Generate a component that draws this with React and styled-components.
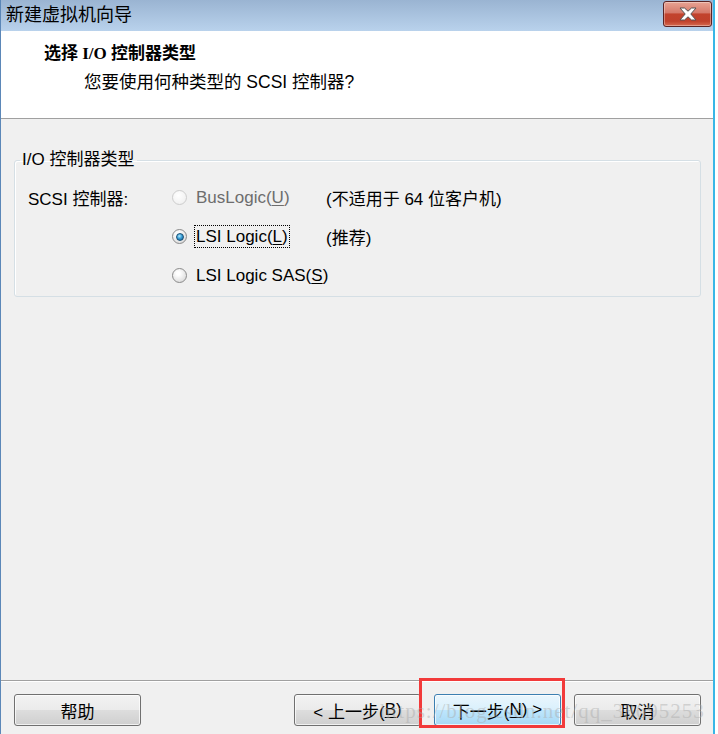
import React from 'react';
import styled, { createGlobalStyle } from 'styled-components';

const Global = createGlobalStyle`
  html, body { margin: 0; padding: 0; background: #fff; }
  body { font-family: "Liberation Sans", "Noto Sans CJK SC", sans-serif; }
`;

const Page = styled.div`
  position: relative;
  display: flex;
  width: 718px;
  height: 734px;
  overflow: hidden;
`;

const Window = styled.div`
  width: 712px;
  display: flex;
  flex-direction: column;
  border-left: 1px solid #5b87b8;
  border-right: 2px solid #38b6e6;
  background: #f0f0f0;
`;

const Backdrop = styled.div`
  flex: 1;
  background: #fff;
`;

const TitleBar = styled.div`
  height: 31px;
  display: flex;
  align-items: flex-start;
  padding-left: 5px;
  background: linear-gradient(#9ab4d2, #b9d2ec);
`;

const TitleText = styled.div`
  font-size: 18px;
  line-height: 30px;
  color: #000;
`;

const CloseBtn = styled.div`
  margin: 1px 1px 0 auto;
  width: 47px;
  height: 24px;
  border: 1px solid #5a2424;
  border-radius: 3px;
  display: flex;
  align-items: center;
  justify-content: center;
  background: linear-gradient(#e8a393 0%, #d5796a 45%, #c2432d 50%, #c0412c 80%, #d66a50 100%);
  box-shadow: inset 0 0 0 1px rgba(255, 255, 255, 0.35);
`;

const Header = styled.div`
  height: 88px;
  background: #fff;
  border-bottom: 1px solid #a0a0a0;
  padding: 12px 0 0 43px;
  box-sizing: border-box;
`;

const Heading = styled.div`
  font-family: "Liberation Serif", "Noto Sans CJK SC", serif;
  font-weight: bold;
  font-size: 17px;
  line-height: 22px;
  color: #000;
`;

const SubHeading = styled.div`
  margin: 6px 0 0 40px;
  font-size: 17.5px;
  line-height: 22px;
  color: #000;
`;

const Body = styled.div`
  flex: 1;
  padding: 0 12px 0 13px;
`;

const Group = styled.fieldset`
  margin: 31px 0 0 0;
  padding: 8px 0 1px 13px;
  border: 1px solid #d5dfe5;
  border-radius: 3px;
  box-shadow: inset 1px 1px 0 #fff;
`;

const Legend = styled.legend`
  padding: 0 3px 0 2px;
  margin-left: -8px;
  font-size: 17px;
  line-height: 20px;
  color: #000;
`;

const Options = styled.div`
  display: grid;
  grid-template-columns: 144px 154px 1fr;
  grid-auto-rows: 39px;
  align-items: center;
  font-size: 17px;
  color: #000;
  white-space: nowrap;
`;

const FieldLabel = styled.div`
  grid-column: 1;
`;

const Choice = styled.label`
  grid-column: 2;
  display: flex;
  align-items: center;
  gap: 8px;
  color: ${p => (p.disabled ? '#6d6d6d' : '#000')};
`;

const Radio = styled.span`
  flex: none;
  width: 15px;
  height: 15px;
  border-radius: 50%;
  box-sizing: border-box;
  display: flex;
  align-items: center;
  justify-content: center;
  border: 1px solid ${p => (p.disabled ? '#cdcdcd' : '#8a8a8a')};
  background: ${p =>
    p.disabled
      ? 'radial-gradient(circle at 40% 35%, #fff, #ececec)'
      : 'radial-gradient(circle at 40% 35%, #fff 15%, #d6d6d6 90%)'};
  &::after {
    content: '';
    display: ${p => (p.checked ? 'block' : 'none')};
    width: 8px;
    height: 8px;
    border-radius: 50%;
    box-sizing: border-box;
    border: 1px solid #1b4f73;
    background: radial-gradient(circle at 40% 35%, #b5ecff 0%, #3aa0d8 45%, #0e5687 100%);
  }
`;

const ChoiceText = styled.span`
  padding: 0 1px;
  line-height: 21px;
  outline: ${p => (p.focused ? '1px dotted #000' : 'none')};
  u { text-decoration: underline; text-underline-offset: 2px; }
`;

const Note = styled.div`
  grid-column: 3;
`;

const Footer = styled.div`
  border-top: 1px solid #a0a0a0;
  box-shadow: inset 0 1px 0 #fff;
  padding: 13px 12px 8px 13px;
  display: flex;
  gap: 13px;
`;

const Button = styled.div`
  width: 125px;
  height: 30px;
  border: 1px solid ${p => (p.primary ? '#3c7fb1' : '#707070')};
  border-radius: 3px;
  display: flex;
  align-items: center;
  justify-content: center;
  font-size: 17px;
  color: #000;
  white-space: nowrap;
  background: ${p =>
    p.primary
      ? 'linear-gradient(#eaf6fd 0%, #d9f0fc 50%, #bee6fd 51%, #a7d9f5 100%)'
      : 'linear-gradient(#f2f2f2 0%, #ebebeb 50%, #dddddd 51%, #cfcfcf 100%)'};
  box-shadow: inset 0 0 0 1px rgba(255, 255, 255, 0.7);
  margin-left: ${p => (p.push ? 'auto' : '0')};
  u { text-decoration: underline; text-underline-offset: 2px; }
`;

const Highlight = styled.div`
  position: absolute;
  left: 419px;
  top: 678px;
  width: 140px;
  height: 44px;
  border: 3px solid #f23a3a;
  pointer-events: none;
`;

const Watermark = styled.div`
  position: absolute;
  left: 380px;
  top: 699px;
  font-family: "Liberation Serif", serif;
  font-size: 21px;
  letter-spacing: 1px;
  color: rgba(170, 170, 170, 0.45);
  pointer-events: none;
  white-space: nowrap;
`;

const CloseIcon = () => (
  <svg width="22" height="16" viewBox="0 0 22 16">
    <path
      d="M3 2 L7.5 2 L11 5.2 L14.5 2 L19 2 L13.8 8 L19 14 L14.5 14 L11 10.8 L7.5 14 L3 14 L8.2 8 Z"
      fill="#fff"
      stroke="#555"
      strokeWidth="1"
      strokeLinejoin="round"
    />
  </svg>
);

export default function App() {
  return (
    <>
      <Global />
      <Page>
        <Window>
          <TitleBar>
            <TitleText>新建虚拟机向导</TitleText>
            <CloseBtn>
              <CloseIcon />
            </CloseBtn>
          </TitleBar>
          <Header>
            <Heading>选择 I/O 控制器类型</Heading>
            <SubHeading>您要使用何种类型的 SCSI 控制器?</SubHeading>
          </Header>
          <Body>
            <Group>
              <Legend>I/O 控制器类型</Legend>
              <Options>
                <FieldLabel>SCSI 控制器:</FieldLabel>
                <Choice disabled>
                  <Radio disabled />
                  <ChoiceText>BusLogic(<u>U</u>)</ChoiceText>
                </Choice>
                <Note>(不适用于 64 位客户机)</Note>
                <Choice>
                  <Radio checked />
                  <ChoiceText focused>LSI Logic(<u>L</u>)</ChoiceText>
                </Choice>
                <Note>(推荐)</Note>
                <Choice>
                  <Radio />
                  <ChoiceText>LSI Logic SAS(<u>S</u>)</ChoiceText>
                </Choice>
              </Options>
            </Group>
          </Body>
          <Footer>
            <Button>帮助</Button>
            <Button push>&lt; 上一步(<u>B</u>)</Button>
            <Button primary>下一步(<u>N</u>) &gt;</Button>
            <Button>取消</Button>
          </Footer>
        </Window>
        <Backdrop />
        <Highlight />
        <Watermark>https://blog.csdn.net/qq_38695253</Watermark>
      </Page>
    </>
  );
}
